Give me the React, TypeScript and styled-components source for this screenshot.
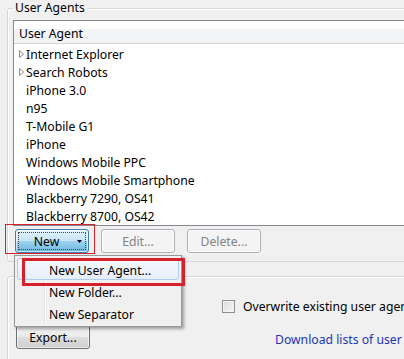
import styled, { createGlobalStyle } from "styled-components"

const GlobalStyle = createGlobalStyle`
    html, body {
        margin: 0;
        padding: 0;
        background: #f0f0f0;
    }
    body {
        font-family: "Noto Sans", "Open Sans", sans-serif;
        font-size: 12.2px;
        color: #000;
    }
`

const Page = styled.div`
    position: relative;
    width: 404px;
    height: 359px;
    overflow: hidden;
    background: #f0f0f0;
`

const Group = styled.fieldset<{ $top?: number }>`
    box-sizing: border-box;
    width: 430px;
    margin: ${(p) => p.$top ?? 0}px 0 0 7px;
    padding: 0 0 8px 5px;
    border: 1px solid #d5d5d5;
    border-radius: 3px;
    box-shadow: inset 1px 1px 0 #fff;
`

const Legend = styled.legend`
    padding: 0 2px;
    margin-left: 0;
    line-height: 16px;
`

const ListBox = styled.div`
    margin-top: 4px;
    width: 420px;
    height: 206px;
    box-sizing: border-box;
    border: 1px solid #828790;
    background: #fff;
`

const Header = styled.div`
    height: 22px;
    line-height: 25px;
    padding-left: 5px;
    border-bottom: 1px solid #d5d5d5;
    background: linear-gradient(#fff 0, #fff 36%, #f3f4f6 36%, #f1f2f4 100%);
`

const Rows = styled.div`
    padding-top: 1px;
`

const Row = styled.div`
    display: flex;
    align-items: center;
    height: 18px;
    padding-left: 5px;
`

const Expander = styled.span`
    display: flex;
    align-items: center;
    width: 7px;
`

const Buttons = styled.div`
    display: flex;
    gap: 12px;
    margin: 3px 0 0 2px;
`

const Button = styled.div<{ $variant?: "hot" | "disabled" | "normal"; $hidden?: boolean }>`
    position: relative;
    box-sizing: border-box;
    width: 74px;
    height: 24px;
    display: flex;
    align-items: center;
    justify-content: center;
    border-radius: 3px;
    visibility: ${(p) => (p.$hidden ? "hidden" : "visible")};
    border: 1px solid
        ${(p) => (p.$variant === "hot" ? "#3c7fb1" : p.$variant === "disabled" ? "#adb2b5" : "#707070")};
    color: ${(p) => (p.$variant === "disabled" ? "#838383" : "#000")};
    background: ${(p) =>
        p.$variant === "hot"
            ? "linear-gradient(#e3f3fb 0, #c6e6f7 48%, #9fd4f0 50%, #6cb6de 100%)"
            : p.$variant === "disabled"
              ? "#f4f4f4"
              : "linear-gradient(#f2f2f2 0, #ebebeb 48%, #dddddd 50%, #cfcfcf 100%)"};
    box-shadow: inset 0 0 0 1px rgba(255, 255, 255, 0.6);
`

const Focus = styled.span`
    position: absolute;
    inset: 2px;
    border: 1px dotted #3a4a5a;
`

const ButtonLabel = styled.span`
    position: relative;
    display: flex;
    align-items: center;
    gap: 18px;
    margin-left: 12px;
`

const Lower = styled.div`
    display: grid;
    grid-template-columns: 74px 1fr;
    column-gap: 132px;
    height: 76px;
    padding: 14px 0 0 3px;
    box-sizing: border-box;
`

const ButtonStack = styled.div`
    display: flex;
    flex-direction: column;
    gap: 10px;
`

const Options = styled.div`
    padding-top: 7px;
`

const CheckRow = styled.label`
    display: flex;
    align-items: center;
    gap: 8px;
    white-space: nowrap;
`

const Box = styled.span`
    box-sizing: border-box;
    width: 13px;
    height: 13px;
    border: 1px solid #8f8f8f;
    background: linear-gradient(135deg, #dcdcdc, #f6f6f6);
    box-shadow: inset 0 0 0 1px #f4f4f4;
`

const Link = styled.a`
    display: block;
    margin: 16px 0 0 53px;
    color: #1c36b8;
    text-decoration: none;
    white-space: nowrap;
`

const Menu = styled.div`
    position: absolute;
    left: 14px;
    top: 255px;
    width: 168px;
    height: 72px;
    box-sizing: border-box;
    padding: 2px;
    border: 1px solid #979797;
    background: #f0f0f0;
    box-shadow: 2px 2px 3px rgba(0, 0, 0, 0.35);
    &::before {
        content: "";
        position: absolute;
        left: 29px;
        top: 2px;
        bottom: 2px;
        width: 1px;
        background: #e2e3e3;
        box-shadow: 1px 0 0 #fff;
    }
`

const MenuItem = styled.div<{ $active?: boolean }>`
    position: relative;
    box-sizing: border-box;
    height: 22px;
    line-height: 21px;
    padding: 1px 0 0 31px;
    border: 1px solid ${(p) => (p.$active ? "#aeccf1" : "transparent")};
    border-radius: 3px;
    background: ${(p) => (p.$active ? "linear-gradient(#f5f9fd, #e6eef9)" : "transparent")};
`

const Callout = styled.div<{ $w: number }>`
    position: absolute;
    box-sizing: border-box;
    border: ${(p) => p.$w}px solid #d6202a;
`

const Arrow = () => (
    <svg width="5" height="3" viewBox="0 0 5 3">
        <path d="M0 0h5L2.5 3z" fill="#000" />
    </svg>
)

const Tri = () => (
    <svg width="5" height="8" viewBox="0 0 5 8">
        <path d="M0.5 0.5L4.5 4L0.5 7.5z" fill="#fff" stroke="#8a8a8a" strokeWidth="1" />
    </svg>
)

const agents: { name: string; folder?: boolean }[] = [
    { name: "Internet Explorer", folder: true },
    { name: "Search Robots", folder: true },
    { name: "iPhone 3.0" },
    { name: "n95" },
    { name: "T-Mobile G1" },
    { name: "iPhone" },
    { name: "Windows Mobile PPC" },
    { name: "Windows Mobile Smartphone" },
    { name: "Blackberry 7290, OS41" },
    { name: "Blackberry 8700, OS42" },
]

export default function App() {
    return (
        <Page>
            <GlobalStyle />
            <Group>
                <Legend>User Agents</Legend>
                <ListBox>
                    <Header>User Agent</Header>
                    <Rows>
                        {agents.map((a) => (
                            <Row key={a.name}>
                                <Expander>{a.folder && <Tri />}</Expander>
                                {a.name}
                            </Row>
                        ))}
                    </Rows>
                </ListBox>
                <Buttons>
                    <Button $variant="hot">
                        <Focus />
                        <ButtonLabel>
                            New <Arrow />
                        </ButtonLabel>
                    </Button>
                    <Button $variant="disabled">Edit...</Button>
                    <Button $variant="disabled">Delete...</Button>
                </Buttons>
            </Group>
            <Group $top={14}>
                <Lower>
                    <ButtonStack>
                        {/* covered by the open menu in the capture */}
                        <Button $hidden>Import...</Button>
                        <Button>Export...</Button>
                    </ButtonStack>
                    <Options>
                        <CheckRow>
                            <Box />
                            Overwrite existing user agents
                        </CheckRow>
                        <Link href="#">Download lists of user agents</Link>
                    </Options>
                </Lower>
            </Group>
            <Menu>
                <MenuItem $active>New User Agent...</MenuItem>
                <MenuItem>New Folder...</MenuItem>
                <MenuItem>New Separator</MenuItem>
            </Menu>
            <Callout $w={1} style={{ left: 5, top: 224, width: 90, height: 30 }} />
            <Callout $w={3} style={{ left: 22, top: 258, width: 163, height: 28 }} />
        </Page>
    )
}
